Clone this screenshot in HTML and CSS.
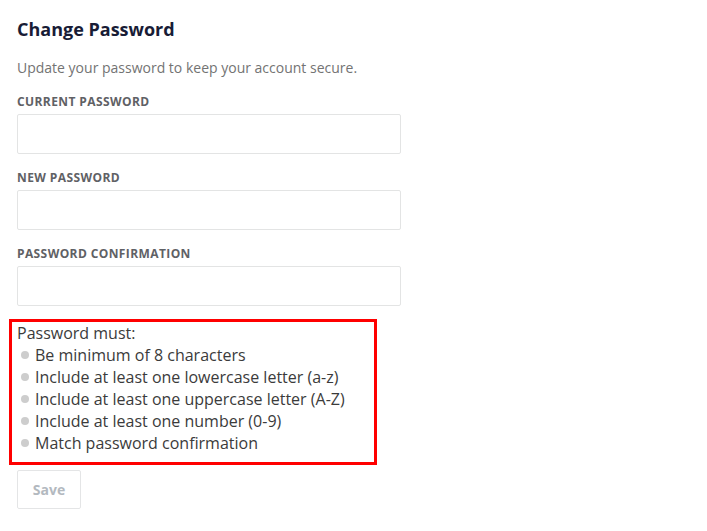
FILE: index.html
```html
<!DOCTYPE html>
<html lang="en">
<head>
<meta charset="utf-8">
<title>Change Password</title>
<link rel="stylesheet" href="styles.css">
</head>
<body>
<div class="page">
  <h1 class="title">Change Password</h1>
  <p class="subtitle">Update your password to keep your account secure.</p>
  <form class="form">
    <div class="field">
      <label class="label" for="cur">Current Password</label>
      <input class="input" id="cur" type="password">
    </div>
    <div class="field">
      <label class="label" for="new">New Password</label>
      <input class="input" id="new" type="password">
    </div>
    <div class="field last">
      <label class="label" for="conf">Password Confirmation</label>
      <input class="input" id="conf" type="password">
    </div>
    <div class="rules">
      <div class="rules-title">Password must:</div>
      <ul class="rules-list">
        <li class="rule"><span class="dot"></span>Be minimum of 8 characters</li>
        <li class="rule"><span class="dot"></span>Include at least one lowercase letter (a-z)</li>
        <li class="rule"><span class="dot"></span>Include at least one uppercase letter (A-Z)</li>
        <li class="rule"><span class="dot"></span>Include at least one number (0-9)</li>
        <li class="rule"><span class="dot"></span>Match password confirmation</li>
      </ul>
    </div>
    <button class="save" type="button" disabled>Save</button>
  </form>
</div>
</body>
</html>
```
FILE: styles.css
```css
html, body {
  margin: 0;
  padding: 0;
  background: #ffffff;
}
body {
  font-family: "Open Sans", "Liberation Sans", sans-serif;
}
.page {
  padding: 17px 0 0 17px;
}
.title {
  margin: 0;
  font-size: 18px;
  line-height: 24px;
  font-weight: 700;
  color: #181c36;
}
.subtitle {
  margin: 17px 0 16px;
  font-size: 14px;
  line-height: 20px;
  color: #737373;
}
.form {
  display: flex;
  flex-direction: column;
  align-items: flex-start;
}
.field {
  display: flex;
  flex-direction: column;
  margin-bottom: 16px;
}
.field.last {
  margin-bottom: 13px;
}
.label {
  font-size: 12px;
  line-height: 16px;
  font-weight: 700;
  text-transform: uppercase;
  letter-spacing: 0.4px;
  color: #5f6165;
  margin-bottom: 4px;
}
.input {
  box-sizing: border-box;
  width: 384px;
  height: 40px;
  margin: 0;
  border: 1px solid #e3e4e4;
  border-radius: 2px;
  background: #fff;
  outline: none;
}
.rules {
  box-sizing: border-box;
  width: 368px;
  margin-left: -8px;
  padding: 0 0 8px 5px;
  border: 3px solid #ff0000;
  font-size: 16px;
  line-height: 22px;
  color: #3b3b3b;
}
.rules-title {
  margin: 0;
}
.rules-list {
  list-style: none;
  margin: 0;
  padding: 0;
}
.rule {
  display: flex;
  align-items: center;
  padding-left: 4px;
}
.dot {
  width: 8px;
  height: 8px;
  border-radius: 50%;
  background: #cdcdcd;
  margin-right: 6px;
  flex: none;
}
.save {
  box-sizing: border-box;
  margin-top: 5px;
  width: 64px;
  height: 39px;
  border: 1px solid #e4e5e6;
  border-radius: 2px;
  background: #fff;
  font-family: "Open Sans", "Liberation Sans", sans-serif;
  font-size: 14px;
  font-weight: 700;
  color: #b3b9bf;
  padding: 0;
}
```
